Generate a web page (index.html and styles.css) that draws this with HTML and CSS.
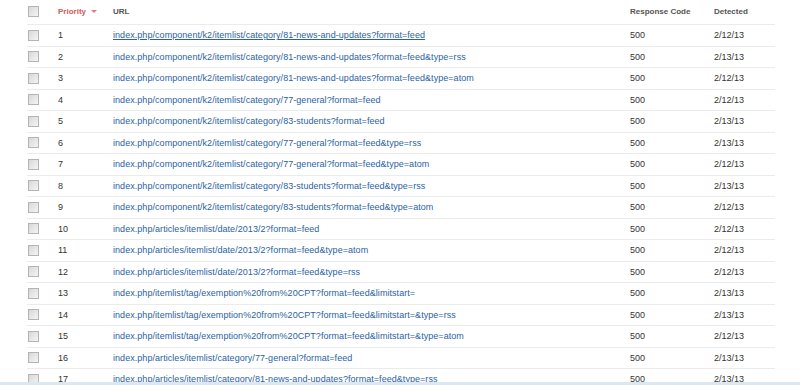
FILE: index.html
```html
<!DOCTYPE html>
<html>
<head>
<meta charset="utf-8">
<link rel="stylesheet" href="styles.css">
</head>
<body>
<table class="list">
<thead>
<tr>
<th class="c-check"><span class="cb"></span></th>
<th class="c-pri sorted">Priority <span class="arrow"></span></th>
<th class="c-url">URL</th>
<th class="c-code">Response Code</th>
<th class="c-date">Detected</th>
</tr>
</thead>
<tbody>
<tr><td class="c-check"><span class="cb"></span></td><td class="c-pri">1</td><td class="c-url"><a class="hover">index.php/component/k2/itemlist/category/81-news-and-updates?format=feed</a></td><td class="c-code">500</td><td class="c-date">2/12/13</td></tr>
<tr><td class="c-check"><span class="cb"></span></td><td class="c-pri">2</td><td class="c-url"><a>index.php/component/k2/itemlist/category/81-news-and-updates?format=feed&amp;type=rss</a></td><td class="c-code">500</td><td class="c-date">2/13/13</td></tr>
<tr><td class="c-check"><span class="cb"></span></td><td class="c-pri">3</td><td class="c-url"><a>index.php/component/k2/itemlist/category/81-news-and-updates?format=feed&amp;type=atom</a></td><td class="c-code">500</td><td class="c-date">2/12/13</td></tr>
<tr><td class="c-check"><span class="cb"></span></td><td class="c-pri">4</td><td class="c-url"><a>index.php/component/k2/itemlist/category/77-general?format=feed</a></td><td class="c-code">500</td><td class="c-date">2/12/13</td></tr>
<tr><td class="c-check"><span class="cb"></span></td><td class="c-pri">5</td><td class="c-url"><a>index.php/component/k2/itemlist/category/83-students?format=feed</a></td><td class="c-code">500</td><td class="c-date">2/13/13</td></tr>
<tr><td class="c-check"><span class="cb"></span></td><td class="c-pri">6</td><td class="c-url"><a>index.php/component/k2/itemlist/category/77-general?format=feed&amp;type=rss</a></td><td class="c-code">500</td><td class="c-date">2/13/13</td></tr>
<tr><td class="c-check"><span class="cb"></span></td><td class="c-pri">7</td><td class="c-url"><a>index.php/component/k2/itemlist/category/77-general?format=feed&amp;type=atom</a></td><td class="c-code">500</td><td class="c-date">2/12/13</td></tr>
<tr><td class="c-check"><span class="cb"></span></td><td class="c-pri">8</td><td class="c-url"><a>index.php/component/k2/itemlist/category/83-students?format=feed&amp;type=rss</a></td><td class="c-code">500</td><td class="c-date">2/13/13</td></tr>
<tr><td class="c-check"><span class="cb"></span></td><td class="c-pri">9</td><td class="c-url"><a>index.php/component/k2/itemlist/category/83-students?format=feed&amp;type=atom</a></td><td class="c-code">500</td><td class="c-date">2/12/13</td></tr>
<tr><td class="c-check"><span class="cb"></span></td><td class="c-pri">10</td><td class="c-url"><a>index.php/articles/itemlist/date/2013/2?format=feed</a></td><td class="c-code">500</td><td class="c-date">2/12/13</td></tr>
<tr><td class="c-check"><span class="cb"></span></td><td class="c-pri">11</td><td class="c-url"><a>index.php/articles/itemlist/date/2013/2?format=feed&amp;type=atom</a></td><td class="c-code">500</td><td class="c-date">2/12/13</td></tr>
<tr><td class="c-check"><span class="cb"></span></td><td class="c-pri">12</td><td class="c-url"><a>index.php/articles/itemlist/date/2013/2?format=feed&amp;type=rss</a></td><td class="c-code">500</td><td class="c-date">2/12/13</td></tr>
<tr><td class="c-check"><span class="cb"></span></td><td class="c-pri">13</td><td class="c-url"><a>index.php/itemlist/tag/exemption%20from%20CPT?format=feed&amp;limitstart=</a></td><td class="c-code">500</td><td class="c-date">2/13/13</td></tr>
<tr><td class="c-check"><span class="cb"></span></td><td class="c-pri">14</td><td class="c-url"><a>index.php/itemlist/tag/exemption%20from%20CPT?format=feed&amp;limitstart=&amp;type=rss</a></td><td class="c-code">500</td><td class="c-date">2/13/13</td></tr>
<tr><td class="c-check"><span class="cb"></span></td><td class="c-pri">15</td><td class="c-url"><a>index.php/itemlist/tag/exemption%20from%20CPT?format=feed&amp;limitstart=&amp;type=atom</a></td><td class="c-code">500</td><td class="c-date">2/12/13</td></tr>
<tr><td class="c-check"><span class="cb"></span></td><td class="c-pri">16</td><td class="c-url"><a>index.php/articles/itemlist/category/77-general?format=feed</a></td><td class="c-code">500</td><td class="c-date">2/13/13</td></tr>
<tr><td class="c-check"><span class="cb"></span></td><td class="c-pri">17</td><td class="c-url"><a>index.php/articles/itemlist/category/81-news-and-updates?format=feed&amp;type=rss</a></td><td class="c-code">500</td><td class="c-date">2/13/13</td></tr>
</tbody>
</table>
<div class="bottom-strip"></div>
</body>
</html>
```
FILE: styles.css
```css
html, body {
  margin: 0;
  padding: 0;
  background: #fff;
  height: 385px;
  overflow: hidden;
}
body {
  font-family: "Liberation Sans", Arial, sans-serif;
  font-size: 9px;
  color: #333;
  position: relative;
}
.list {
  margin-left: 27px;
  width: 748px;
  border-collapse: collapse;
  table-layout: fixed;
}
.list th, .list td {
  padding: 0;
  text-align: left;
  vertical-align: middle;
  white-space: nowrap;
  overflow: hidden;
}
.list th {
  height: 22px;
  font-weight: bold;
  color: #555;
  font-size: 8px;
  border-bottom: 1px solid #ebebeb;
  padding-bottom: 2px;
}
.list td {
  height: 20.5px;
  border-bottom: 1px solid #ebebeb;
}
.c-check { width: 31px; }
.c-pri { width: 55px; }
.c-url { width: 517px; }
.c-code { width: 84px; }
.c-date { width: 61px; }
th.sorted { color: #d05a5a; }
.arrow {
  display: inline-block;
  width: 0;
  height: 0;
  border-left: 3px solid transparent;
  border-right: 3px solid transparent;
  border-top: 3px solid #d98080;
  margin-left: 3px;
  vertical-align: middle;
}
.cb {
  display: block;
  width: 9px;
  height: 9px;
  margin-left: 1px;
  border: 1px solid #b4b4b4;
  background: linear-gradient(135deg, #d8d8d8, #f4f4f4);
}
.c-url a {
  color: #2b5fa6;
  text-decoration: none;
  letter-spacing: 0.05px;
}
.c-url a.hover { text-decoration: underline; }
.bottom-strip {
  position: absolute;
  left: 0;
  right: 0;
  bottom: 0;
  height: 3px;
  background: #dde7ef;
}
```
